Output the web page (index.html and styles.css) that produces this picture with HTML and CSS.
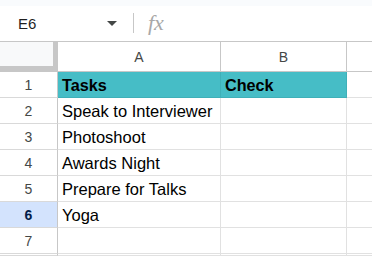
FILE: index.html
```html
<!DOCTYPE html>
<html>
<head>
<meta charset="utf-8">
<link rel="stylesheet" href="styles.css">
</head>
<body>
<div class="topstrip"></div>
<div class="formula-bar">
  <div class="namebox">E6</div>
  <div class="caret"></div>
  <div class="sep"></div>
  <div class="fx">fx</div>
</div>
<div class="sheet">
  <div class="corner"></div>
  <div class="colhead">A</div>
  <div class="colhead">B</div>
  <div class="colhead rest"></div>

  <div class="rowhead">1</div>
  <div class="cell hdr">Tasks</div>
  <div class="cell hdr">Check</div>
  <div class="cell rest"></div>

  <div class="rowhead">2</div>
  <div class="cell">Speak to Interviewer</div>
  <div class="cell"></div>
  <div class="cell rest"></div>

  <div class="rowhead">3</div>
  <div class="cell">Photoshoot</div>
  <div class="cell"></div>
  <div class="cell rest"></div>

  <div class="rowhead">4</div>
  <div class="cell">Awards Night</div>
  <div class="cell"></div>
  <div class="cell rest"></div>

  <div class="rowhead">5</div>
  <div class="cell">Prepare for Talks</div>
  <div class="cell"></div>
  <div class="cell rest"></div>

  <div class="rowhead sel">6</div>
  <div class="cell">Yoga</div>
  <div class="cell"></div>
  <div class="cell rest"></div>

  <div class="rowhead">7</div>
  <div class="cell"></div>
  <div class="cell"></div>
  <div class="cell rest"></div>

  <div class="rowhead"></div>
  <div class="cell"></div>
  <div class="cell"></div>
  <div class="cell rest"></div>
</div>
</body>
</html>
```
FILE: styles.css
```css
* { box-sizing: border-box; }
html, body {
  margin: 0;
  padding: 0;
  width: 372px;
  height: 256px;
  overflow: hidden;
  background: #ffffff;
  font-family: "Liberation Sans", Arial, sans-serif;
}
.topstrip {
  height: 6px;
  background: #f9fbfd;
}
.formula-bar {
  height: 36px;
  border-bottom: 1px solid #c7c7c7;
  display: flex;
  align-items: center;
  padding-bottom: 1px;
}
.namebox {
  width: 107px;
  padding-left: 18px;
  font-size: 15px;
  color: #1f1f1f;
}
.caret {
  width: 0;
  height: 0;
  border-left: 5px solid transparent;
  border-right: 5px solid transparent;
  border-top: 5px solid #444746;
  margin-right: 16px;
}
.sep {
  width: 1px;
  height: 20px;
  background: #c7c7c7;
  margin-right: 14px;
}
.fx {
  font-family: "Liberation Serif", "Times New Roman", serif;
  font-style: italic;
  font-size: 22px;
  color: #a8a8a8;
}
.sheet {
  display: grid;
  grid-template-columns: 58px 163px 126px 1fr;
  grid-template-rows: 30px repeat(7, 26px) 2px;
}
.corner {
  background: #f8f9fa;
  border-right: 5px solid #c7c7c7;
  border-bottom: 6px solid #c7c7c7;
}
.colhead {
  border-right: 1px solid #c7c7c7;
  border-bottom: 1px solid #c7c7c7;
  display: flex;
  align-items: center;
  justify-content: center;
  font-size: 14px;
  color: #444746;
  padding-top: 1px;
}
.colhead.rest { border-right: none; }
.rowhead {
  border-right: 1px solid #c7c7c7;
  border-bottom: 1px solid #d9d9d9;
  display: flex;
  align-items: center;
  justify-content: center;
  font-size: 14px;
  color: #444746;
}
.rowhead.sel {
  background: #d3e3fd;
  color: #041e49;
  font-weight: bold;
}
.cell {
  border-right: 1px solid #e1e1e1;
  border-bottom: 1px solid #e1e1e1;
  font-size: 16.5px;
  line-height: 25px;
  padding: 1px 0 0 4px;
  color: #000000;
  white-space: nowrap;
  overflow: hidden;
}
.cell.rest { border-right: none; }
.cell.hdr {
  background: #46bdc6;
  font-weight: bold;
  font-size: 16.2px;
  border-right-color: #3fb0b8;
  border-bottom-color: #3fb0b8;
}
```
